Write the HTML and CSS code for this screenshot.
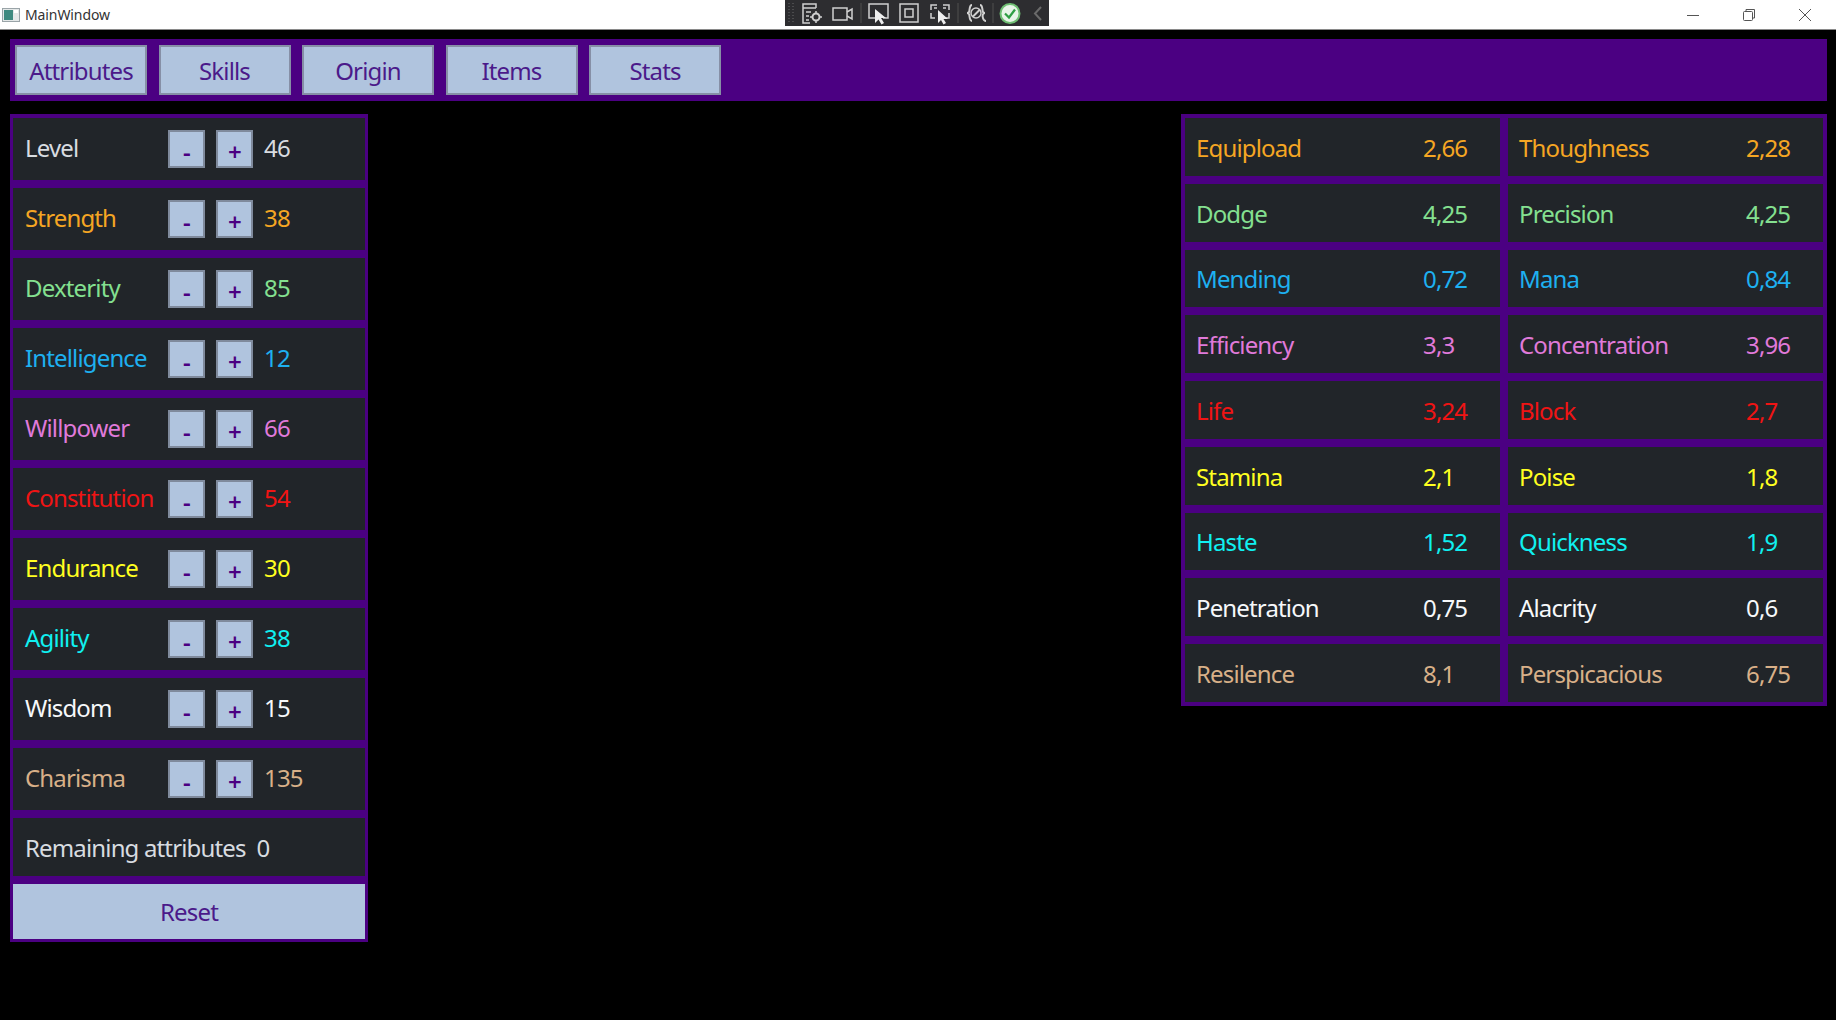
FILE: index.html
```html
<!DOCTYPE html>
<html lang="en">
<head>
<meta charset="UTF-8">
<title>MainWindow</title>
<link rel="stylesheet" href="styles.css">
</head>
<body>

<header class="titlebar">
    <div class="title-left">
        <svg class="app-icon" width="18" height="16" viewBox="0 0 18 16">
            <rect x="0.5" y="1.5" width="17" height="13" fill="#e4e8e8" stroke="#9aa4a8"/>
            <rect x="2" y="3" width="9" height="10" fill="#3f8a80"/>
            <rect x="12" y="3" width="4" height="3" fill="#fff"/>
        </svg>
        <span>MainWindow</span>
    </div>

    <div class="debug-bar">
        <svg width="264" height="26" viewBox="0 0 264 26" fill="none" stroke="#cfcfcf" stroke-width="1.5">
            <g stroke="#6a6a6a" stroke-width="1" stroke-dasharray="1 2">
                <path d="M4 3v20M8 3v20"/>
            </g>
            <!-- live tree -->
            <path d="M25 23H18V4h13v4M18 8h13M21 12h5M21 16h3M21 20h3"/>
            <circle cx="31" cy="17" r="3.500" stroke-width="2"/>
            <path d="M31 11v2M31 21v2M25 17h2M35 17h2" stroke-width="1.500"/>
            <!-- camera -->
            <rect x="48" y="8" width="14" height="12"/>
            <path d="M62 12l5-3v10l-5-3"/>
            <path d="M76 3v20" stroke="#444"/>
            <!-- select -->
            <path d="M90 18H84V4h19v14h-5"/>
            <path d="M90 9v14l3.500-3.500 3 5 2.500-1.500-3-5h5z" fill="#eee" stroke="none"/>
            <!-- layout -->
            <rect x="115" y="4" width="18" height="18"/>
            <rect x="120" y="9" width="8" height="8"/>
            <!-- track element -->
            <path d="M146 10V5h6M158 5h6v5M146 13v5h4M164 13v5h-3M149 8h3M158 8h3"/>
            <path d="M153 10v13l3-3 2.500 4.500 2.500-1.500-2.500-4h4.500z" fill="#eee" stroke="none"/>
            <path d="M173 3v20" stroke="#444"/>
            <!-- binding -->
            <path d="M187 5c-3 0-2 5-3 7-.5 1-2 1-2 1s1.500 0 2 1c1 2 0 7 3 7M195 5c3 0 2 5 3 7 .5 1 2 1 2 1s-1.500 0-2 1c-1 2 0 7 3 7" stroke-width="2"/>
            <circle cx="191" cy="13" r="5"/>
            <path d="M188 16.500l7-7" stroke-width="2"/>
            <path d="M208 3v20" stroke="#444"/>
            <!-- ok -->
            <circle cx="225" cy="13.500" r="9.500" fill="#e8f4e8" stroke="#6fbf73" stroke-width="2"/>
            <path d="M220 13.500l4 4 6-8" stroke="#2f9e44" stroke-width="2.200"/>
            <path d="M256 7l-6 6.500 6 6.500" stroke="#6a6a6a" stroke-width="2"/>
        </svg>
    </div>

    <div class="window-btns">
        <svg width="12" height="12" viewBox="0 0 12 12" fill="none" stroke="#555"><path d="M0 6.500h12"/></svg>
        <svg width="12" height="12" viewBox="0 0 12 12" fill="none" stroke="#555"><rect x="0.500" y="2.500" width="9" height="9" rx="1"/><path d="M3 2.500V0.500h8.500V9H9.500"/></svg>
        <svg width="12" height="12" viewBox="0 0 12 12" fill="none" stroke="#555"><path d="M0 0l12 12M12 0L0 12"/></svg>
    </div>
</header>

<main class="content">
    <nav class="tabs">
        <button class="tab">Attributes</button>
        <button class="tab">Skills</button>
        <button class="tab">Origin</button>
        <button class="tab">Items</button>
        <button class="tab">Stats</button>
    </nav>

    <div class="panels">
        <section class="attributes">
            <div class="attr-row c-grey"><span class="attr-name">Level</span><button class="step">-</button><button class="step">+</button><span class="attr-val">46</span></div>
            <div class="attr-row c-orange"><span class="attr-name">Strength</span><button class="step">-</button><button class="step">+</button><span class="attr-val">38</span></div>
            <div class="attr-row c-green"><span class="attr-name">Dexterity</span><button class="step">-</button><button class="step">+</button><span class="attr-val">85</span></div>
            <div class="attr-row c-blue"><span class="attr-name">Intelligence</span><button class="step">-</button><button class="step">+</button><span class="attr-val">12</span></div>
            <div class="attr-row c-pink"><span class="attr-name">Willpower</span><button class="step">-</button><button class="step">+</button><span class="attr-val">66</span></div>
            <div class="attr-row c-red"><span class="attr-name">Constitution</span><button class="step">-</button><button class="step">+</button><span class="attr-val">54</span></div>
            <div class="attr-row c-yellow"><span class="attr-name">Endurance</span><button class="step">-</button><button class="step">+</button><span class="attr-val">30</span></div>
            <div class="attr-row c-cyan"><span class="attr-name">Agility</span><button class="step">-</button><button class="step">+</button><span class="attr-val">38</span></div>
            <div class="attr-row c-white"><span class="attr-name">Wisdom</span><button class="step">-</button><button class="step">+</button><span class="attr-val">15</span></div>
            <div class="attr-row c-tan"><span class="attr-name">Charisma</span><button class="step">-</button><button class="step">+</button><span class="attr-val">135</span></div>
            <div class="remaining c-grey"><span>Remaining attributes</span><span>0</span></div>
            <button class="reset">Reset</button>
        </section>

        <section class="stats">
            <div class="stat c-orange"><span>Equipload</span><span class="stat-val">2,66</span></div>
            <div class="stat c-orange"><span>Thoughness</span><span class="stat-val">2,28</span></div>
            <div class="stat c-green"><span>Dodge</span><span class="stat-val">4,25</span></div>
            <div class="stat c-green"><span>Precision</span><span class="stat-val">4,25</span></div>
            <div class="stat c-blue"><span>Mending</span><span class="stat-val">0,72</span></div>
            <div class="stat c-blue"><span>Mana</span><span class="stat-val">0,84</span></div>
            <div class="stat c-pink"><span>Efficiency</span><span class="stat-val">3,3</span></div>
            <div class="stat c-pink"><span>Concentration</span><span class="stat-val">3,96</span></div>
            <div class="stat c-red"><span>Life</span><span class="stat-val">3,24</span></div>
            <div class="stat c-red"><span>Block</span><span class="stat-val">2,7</span></div>
            <div class="stat c-yellow"><span>Stamina</span><span class="stat-val">2,1</span></div>
            <div class="stat c-yellow"><span>Poise</span><span class="stat-val">1,8</span></div>
            <div class="stat c-cyan"><span>Haste</span><span class="stat-val">1,52</span></div>
            <div class="stat c-cyan"><span>Quickness</span><span class="stat-val">1,9</span></div>
            <div class="stat c-white"><span>Penetration</span><span class="stat-val">0,75</span></div>
            <div class="stat c-white"><span>Alacrity</span><span class="stat-val">0,6</span></div>
            <div class="stat c-tan"><span>Resilence</span><span class="stat-val">8,1</span></div>
            <div class="stat c-tan"><span>Perspicacious</span><span class="stat-val">6,75</span></div>
        </section>
    </div>
</main>

</body>
</html>
```

FILE: styles.css
```css
html, body {
    margin: 0;
    padding: 0;
    height: 100%;
    overflow: hidden;
}

body {
    background-color: #000;
    font-family: "Noto Sans", "Open Sans", sans-serif;
    font-size: 24px;
    letter-spacing: -0.85px;
}

button {
    font-family: inherit;
    font-size: inherit;
    letter-spacing: inherit;
    color: #4b0082;
    background-color: #b0c4de;
    padding: 0;
}

/* Title bar */
.titlebar {
    position: relative;
    height: 29px;
    background-color: #fff;
    border-bottom: 1px solid #8a8a8a;
    display: flex;
    align-items: center;
    justify-content: space-between;
    padding: 0 25px 0 2px;
}

.title-left {
    display: flex;
    align-items: center;
    gap: 5px;
    font-size: 14px;
    letter-spacing: -0.1px;
    color: #333;
}

.debug-bar {
    position: absolute;
    left: 785px;
    top: 0;
    width: 264px;
    height: 26px;
    background-color: #2d2d30;
}

.debug-bar svg {
    display: block;
}

.window-btns {
    display: flex;
    gap: 44px;
}

/* Main area */
.content {
    padding: 9px 9px 0 10px;
}

.tabs {
    height: 62px;
    box-sizing: border-box;
    background-color: #4b0082;
    padding: 6px 5px;
    display: flex;
    gap: 11.500px;
}

.tab {
    width: 132px;
    height: 50px;
    border: 2px solid #868fa6;
    color: #4b1a8a;
    padding-top: 1px;
}

.panels {
    display: flex;
    justify-content: space-between;
    align-items: flex-start;
    margin-top: 13px;
}

/* Left panel */
.attributes {
    width: 358px;
    box-sizing: border-box;
    background-color: #4b0082;
    padding: 4px 3px 3px;
    display: flex;
    flex-direction: column;
    gap: 8px;
}

.attr-row {
    height: 62px;
    background-color: #212529;
    display: flex;
    align-items: center;
    padding-left: 12px;
}

.attr-name {
    width: 143px;
    margin-bottom: 3px;
}

.step {
    width: 37px;
    height: 38px;
    margin-right: 11px;
    border: 2px solid #7f8a9c;
    font-weight: 600;
    font-size: 24px;
    line-height: 34px;
    padding-top: 3px;
}

.attr-val {
    margin-bottom: 3px;
}

.remaining {
    height: 58px;
    background-color: #212529;
    display: flex;
    align-items: center;
    gap: 11px;
    padding-left: 12px;
}

.reset {
    height: 55px;
    border: none;
    color: #4b1a8a;
}

/* Right panel */
.stats {
    width: 646px;
    box-sizing: border-box;
    background-color: #4b0082;
    padding: 4px;
    display: grid;
    grid-template-columns: 315px 315px;
    grid-auto-rows: 57.750px;
    gap: 8px;
}

.stat {
    background-color: #212529;
    display: flex;
    align-items: center;
    padding: 1px 0 0 11px;
}

.stat > span:first-child {
    width: 227px;
}

/* Stat colours */
.c-grey { color: #d8dce0; }
.c-orange { color: #f5a623; }
.c-green { color: #84e090; }
.c-blue { color: #1eb0f0; }
.c-pink { color: #e07ada; }
.c-red { color: #f01414; }
.c-yellow { color: #ffff20; }
.c-cyan { color: #10f0f0; }
.c-white { color: #f6f8fa; }
.c-tan { color: #d8b088; }
```
